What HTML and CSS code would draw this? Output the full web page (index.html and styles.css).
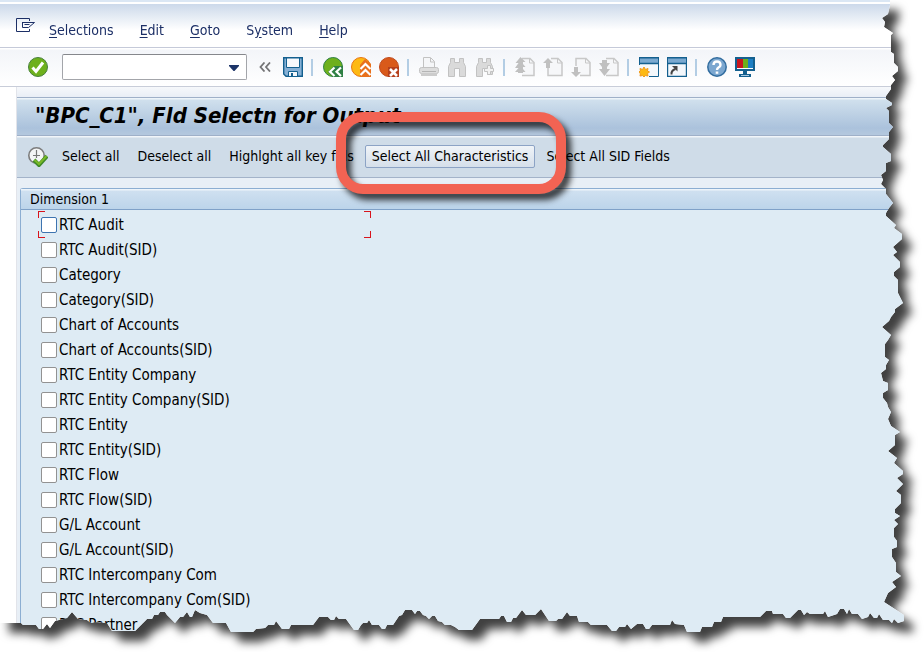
FILE: index.html
```html
<!DOCTYPE html>
<html lang="en">
<head>
    <meta charset="UTF-8">
    <meta name="viewport" content="width=device-width, initial-scale=1.0">
    <title>"BPC_C1", Fld Selectn for Output</title>
    <link rel="stylesheet" href="styles.css">
</head>
<body>
    <div class="shadow">
        <div class="window">
            <nav class="menubar">
                <button type="button" class="menu-icon" aria-label="Menu">
                    <svg width="20" height="16" viewBox="0 0 20 16" fill="none" stroke="#1c2f66" stroke-width="1"><path d="M13.500 4V1.500H.5v13h13V12"/><path d="M6.500 5.500h5M6.500 5v5.500h6M9 5.500h9.500M12.500 10.500l6-5M8.500 7.500h5"/></svg>
                </button>
                <button type="button" class="menu"><u>S</u>elections</button>
                <button type="button" class="menu"><u>E</u>dit</button>
                <button type="button" class="menu"><u>G</u>oto</button>
                <button type="button" class="menu">S<u>y</u>stem</button>
                <button type="button" class="menu"><u>H</u>elp</button>
            </nav>

            <div class="toolbar">
                <button type="button" class="icon" aria-label="Enter">
                    <svg width="20" height="20" viewBox="0 0 20 20"><circle cx="10" cy="10" r="9.500" fill="#6eb01c" stroke="#47803c"/><path d="M4.500 10.500l3.500 4 7-9" fill="none" stroke="#fff" stroke-width="3"/></svg>
                </button>
                <div class="command">
                    <select aria-label="Command"><option></option></select>
                    <svg width="10" height="6" viewBox="0 0 10 6"><path d="M0 0h10v1L5.500 6h-1L0 1z" fill="#1c3468"/></svg>
                </div>
                <button type="button" class="icon small" aria-label="Collapse">
                    <svg width="12" height="10" viewBox="0 0 12 10" fill="none" stroke="#747476" stroke-width="1.800"><path d="M5.500.5L1.500 5l4 4.500M11 .5L7 5l4 4.500"/></svg>
                </button>
                <button type="button" class="icon" aria-label="Save">
                    <svg width="20" height="20" viewBox="0 0 20 20"><path d="M.7.700h18.600v18.600H3l-2.300-2.300z" fill="#86b0d5" stroke="#14608f" stroke-width="1.400"/><path d="M3.500 1h13v9.500h-13z" fill="#f7f9fc" stroke="#14608f"/><path d="M5.500 19v-4.500h9V19" fill="#f4f7fb" stroke="#14608f"/><path d="M8 16h2v3H8z" fill="#14608f"/></svg>
                </button>
                <span class="sep"></span>
                <button type="button" class="icon" aria-label="Back">
                    <svg width="20" height="20" viewBox="0 0 20 20"><path d="M19.500 9.500A9.500 9.500 0 1 0 10 19.500" fill="#6eb01c" stroke="#2f8044"/><path d="M10 20l-5-5 6-6h9v11z" fill="#2f8044"/><path d="M11.500 10.500L7 14.700l4.500 4.300M18 10.500l-4.500 4.200L18 19" fill="none" stroke="#fff" stroke-width="2.200"/></svg>
                </button>
                <button type="button" class="icon" aria-label="Exit">
                    <svg width="20" height="20" viewBox="0 0 20 20"><circle cx="10" cy="10" r="9.500" fill="#fdb913" stroke="#e87511"/><path d="M14 2l6 5v13H9V8z" fill="#e8701c"/><path d="M9.500 12l5-5 5 5M9.500 18l5-5 5 5" fill="none" stroke="#fff" stroke-width="2.200"/></svg>
                </button>
                <button type="button" class="icon" aria-label="Cancel">
                    <svg width="20" height="20" viewBox="0 0 20 20"><circle cx="10" cy="10" r="9.500" fill="#d95a1a" stroke="#c04a1c"/><path d="M9 10h11v10H9z" fill="#b5401c"/><path d="M11 12l7 7M18 12l-7 7" stroke="#fff" stroke-width="2.600"/></svg>
                </button>
                <span class="sep"></span>
                <button type="button" class="icon" aria-label="Print" disabled>
                    <svg width="20" height="20" viewBox="0 0 20 20" fill="#f5f6f8" stroke="#c2c2c2"><path d="M4.500 11V.5h7l4 4V11"/><path d="M11.500 1v4h4" fill="none"/><rect x=".5" y="10.500" width="19" height="6" rx="2" fill="#ddd"/><path d="M2 16h16v3H2z" fill="#ccc" stroke="none"/><path d="M3 14.500h14" stroke="#b4b4b4"/></svg>
                </button>
                <button type="button" class="icon" aria-label="Find" disabled>
                    <svg width="20" height="20" viewBox="0 0 20 20" fill="#dadada" stroke="#c2c2c2"><path d="M3.500 1.500h4v4h5v-4h4v4l2 4v10h-6v-8h-5v8h-6v-10l2-4z"/></svg>
                </button>
                <button type="button" class="icon" aria-label="Find next" disabled>
                    <svg width="20" height="20" viewBox="0 0 20 20" fill="#dadada" stroke="#c2c2c2"><path d="M3.500 1.500h4v4h4v-4h4v4l2 4v8h-5v-6h-5v8h-6v-10l2-4z"/><path d="M12.500 8.500h3v3h3v3h-3v3h-3v-3h-3v-3h3z" fill="#f2f2f2"/></svg>
                </button>
                <span class="sep"></span>
                <button type="button" class="icon" aria-label="First page" disabled>
                    <svg width="20" height="20" viewBox="0 0 20 20"><path d="M7 1.500h8l4 4v13H7" fill="#f6f7f9" stroke="#c8c8c8" stroke-width="1.500"/><path d="M14.500 2v4H19" fill="none" stroke="#c8c8c8"/><path d="M5.500 0l5 5H8v2l2.500 3H8v2l2.500 3H8v1H3v-1H0l3.500-4H0l3.500-5H.5z" fill="#c0c0c0"/></svg>
                </button>
                <button type="button" class="icon" aria-label="Previous page" disabled>
                    <svg width="20" height="20" viewBox="0 0 20 20"><path d="M5 10v8.500h14v-13l-4-4H8" fill="#f6f7f9" stroke="#c8c8c8" stroke-width="1.500"/><path d="M14.500 2v4H19" fill="none" stroke="#c8c8c8"/><path d="M5 1l5 5H7v5H3V6H0z" fill="#c0c0c0"/></svg>
                </button>
                <button type="button" class="icon" aria-label="Next page" disabled>
                    <svg width="20" height="20" viewBox="0 0 20 20"><path d="M5 9V1.500h10l4 4v13H9" fill="#f6f7f9" stroke="#c8c8c8" stroke-width="1.500"/><path d="M14.500 2v4H19" fill="none" stroke="#c8c8c8"/><path d="M5 20l5-5H7v-5H3v5H0z" fill="#c0c0c0"/></svg>
                </button>
                <button type="button" class="icon" aria-label="Last page" disabled>
                    <svg width="20" height="20" viewBox="0 0 20 20"><path d="M7 1.500h8l4 4v13H7" fill="#f6f7f9" stroke="#c8c8c8" stroke-width="1.500"/><path d="M14.500 2v4H19" fill="none" stroke="#c8c8c8"/><path d="M3 3h5v3h3l-3 4v2h3l-5.500 7L0 12h3v-2L0 6h3z" fill="#c0c0c0"/></svg>
                </button>
                <span class="sep"></span>
                <button type="button" class="icon" aria-label="New session">
                    <svg width="20" height="20" viewBox="0 0 20 20"><path d="M.5.500h19v19H.5z" fill="#f3f7fb" stroke="#14608f"/><path d="M1 1h18v5H1z" fill="#7aa9d0"/><path d="M0 .7h20M0 6.500h20" stroke="#14608f" stroke-width="1.400"/><path d="M0 8h10v12H0z" fill="#f6f7f9"/><path d="M5 10l1.500 2.500L9 11.500 8.500 14l2 1-2 1.500.5 2.500-2.500-.5L5 20l-1.500-1.500L1 19l.5-2.500L-.5 15l2-1L1 11.500l2.500 1z" fill="#fdb913" stroke="#f29a1c"/></svg>
                </button>
                <button type="button" class="icon" aria-label="Create shortcut">
                    <svg width="20" height="20" viewBox="0 0 20 20"><path d="M.6.600h18.800v18.800H.6z" fill="#f3f7fb" stroke="#14608f" stroke-width="1.200"/><path d="M1 1h18v5H1z" fill="#7aa9d0"/><path d="M0 .7h20M0 6.500h20" stroke="#14608f" stroke-width="1.400"/><path d="M4.500 17.500q-.5-4 4-5.500" fill="none" stroke="#444" stroke-width="2"/><path d="M5 9h5.500v5.500z" fill="#444"/></svg>
                </button>
                <span class="sep"></span>
                <button type="button" class="icon" aria-label="Help">
                    <svg width="20" height="20" viewBox="0 0 20 20"><circle cx="10" cy="10" r="9.200" fill="#7ba7d0" stroke="#326d9f" stroke-width="1.500"/><path d="M6.500 8q0-3.500 3.500-3.500T13.500 8q0 1.500-2 2.500-1.500 1-1.500 2.500" fill="none" stroke="#fff" stroke-width="2.400"/><path d="M8.700 14.500h2.600v2.300H8.700z" fill="#fff"/></svg>
                </button>
                <button type="button" class="icon" aria-label="Customize layout">
                    <svg width="20" height="20" viewBox="0 0 20 20"><path d="M0 0h20v14H0z" fill="#14608f"/><path d="M2 2h16v10H2z" fill="#fff"/><path d="M2 2h6v9H2z" fill="#c8161d"/><path d="M8 2h5v9H8z" fill="#6eb01c"/><path d="M13 2h5v9h-5z" fill="#1d7fc4"/><path d="M8 14h4v3h4v3H4v-3h4z" fill="#14608f"/><path d="M6 18h8v1H6z" fill="#a9c8e2"/></svg>
                </button>
            </div>

            <main class="screen">
                <h1>"BPC_C1", Fld Selectn for Output</h1>
                <div class="app-toolbar">
                    <button type="button" class="icon" aria-label="Execute">
                        <svg width="20" height="20" viewBox="0 0 20 20"><circle cx="8.500" cy="8.500" r="7.700" fill="#f4f5f5" stroke="#7d7d7d" stroke-width="1.600"/><path d="M8.500 3v8M5 8.500h7" stroke="#777" stroke-width="1.200"/><path d="M6 13l5 5 8-9" fill="none" stroke="#3f8a28" stroke-width="4"/><path d="M6.500 13l4.500 4 7.500-8" fill="none" stroke="#79b928" stroke-width="2"/></svg>
                    </button>
                    <button type="button" class="action">Select all</button>
                    <button type="button" class="action">Deselect all</button>
                    <button type="button" class="action">Highlght all key flds</button>
                    <div class="marked">
                        <button type="button" class="action raised">Select All Characteristics</button>
                        <span class="callout"></span>
                    </div>
                    <button type="button" class="action">Select All SID Fields</button>
                </div>

                <section class="group">
                    <h2>Dimension 1</h2>
                    <ul class="fields">
                        <li class="current"><label><input type="checkbox">RTC Audit</label></li>
                        <li><label><input type="checkbox">RTC Audit(SID)</label></li>
                        <li><label><input type="checkbox">Category</label></li>
                        <li><label><input type="checkbox">Category(SID)</label></li>
                        <li><label><input type="checkbox">Chart of Accounts</label></li>
                        <li><label><input type="checkbox">Chart of Accounts(SID)</label></li>
                        <li><label><input type="checkbox">RTC Entity Company</label></li>
                        <li><label><input type="checkbox">RTC Entity Company(SID)</label></li>
                        <li><label><input type="checkbox">RTC Entity</label></li>
                        <li><label><input type="checkbox">RTC Entity(SID)</label></li>
                        <li><label><input type="checkbox">RTC Flow</label></li>
                        <li><label><input type="checkbox">RTC Flow(SID)</label></li>
                        <li><label><input type="checkbox">G/L Account</label></li>
                        <li><label><input type="checkbox">G/L Account(SID)</label></li>
                        <li><label><input type="checkbox">RTC Intercompany Com</label></li>
                        <li><label><input type="checkbox">RTC Intercompany Com(SID)</label></li>
                        <li><label><input type="checkbox">RTC Partner</label></li>
                    </ul>
                </section>
            </main>
        </div>
    </div>
    <script src="torn.js"></script>
</body>
</html>
```

FILE: styles.css
```css
* {
    box-sizing: border-box;
}
body {
    margin: 0;
    background-color: #fff;
    font-family: "DejaVu Sans Condensed", "DejaVu Sans", Tahoma, sans-serif;
    font-size: 14px;
    color: #000;
    overflow: hidden;
}
button {
    font: inherit;
    color: inherit;
    background: none;
    border: none;
    padding: 0;
    white-space: nowrap;
    cursor: pointer;
}
svg {
    display: block;
}

/* torn sheet */
.shadow {
    filter: drop-shadow(9px 10px 5px rgba(0, 0, 0, 0.75));
}
.window {
    display: flex;
    flex-direction: column;
    height: 100vh;
    overflow: hidden;
    background-color: #fff;
}

.menubar {
    display: flex;
    align-items: center;
    gap: 26px;
    height: 48px;
    padding: 12px 16px 0;
    border-bottom: 1px solid #c5cad9;
    background: linear-gradient(#dbe7f4 2px, #fff 2px, #fff 4px, #ccd9ea 4px, #fff 30px);
    color: #1c2f66;
    flex: none;
}
.menu-icon {
    margin: -10px -13px 0 0;
}
.menu {
    line-height: 20px;
}
.menu u {
    text-underline-offset: 2px;
}

.toolbar {
    display: flex;
    align-items: center;
    gap: 8px;
    height: 39px;
    padding: 0 28px;
    border-bottom: 1px solid #c8cdd9;
    background: linear-gradient(#fff 1px, #f3f5f9 2px, #fff);
    flex: none;
}
.icon {
    width: 20px;
    height: 20px;
    flex: none;
}
.icon.small {
    width: 12px;
    height: 10px;
    margin: 0 4px;
}
.command {
    position: relative;
    width: 185px;
    margin: 0 0 0 6px;
}
.command select {
    display: block;
    appearance: none;
    width: 100%;
    height: 26px;
    border: 1px solid #a3a5aa;
    border-top-color: #85878c;
    border-radius: 2px;
    background-color: #fff;
}
.command svg {
    position: absolute;
    right: 8px;
    top: 11px;
    pointer-events: none;
}
.sep {
    width: 2px;
    height: 17px;
    margin: 0 1px 0 0;
    background-color: #b3cde4;
    flex: none;
}
.sep + .icon {
    margin-left: 1px;
}

.screen {
    display: flex;
    flex-direction: column;
    flex: 1;
    min-height: 0;
    padding: 10px 0 0 16px;
    background: linear-gradient(#f6f8fb, #e9eef6 10px, #e8eff6 10px);
    position: relative;
}
.screen::before {
    content: "";
    position: absolute;
    left: 0;
    top: 0;
    bottom: 0;
    width: 16px;
    background-color: #fff;
    border-right: 1px solid #e2e4ea;
}
h1 {
    margin: 0;
    padding: 0 18px;
    height: 39px;
    line-height: 36px;
    font-size: 22px;
    font-weight: bold;
    font-style: italic;
    border: 1px solid #9fb0c8;
    border-width: 1px 0 1px 1px;
    background: linear-gradient(#edf4f9 1px, #d0e0ed 2px, #abc2dc 30px, #b4c8de);
    white-space: nowrap;
    flex: none;
}
.app-toolbar {
    display: flex;
    align-items: center;
    height: 42px;
    padding: 0 11px;
    border: 1px solid #a3b3c9;
    border-width: 0 0 1px 1px;
    background: linear-gradient(#f1f5f9 1px, #cfdce8 2px);
    flex: none;
}
.app-toolbar .icon {
    margin-right: 7px;
}
.action {
    height: 23px;
    line-height: 21px;
    padding: 0 6px;
    margin-right: 4px;
    border: 1px solid transparent;
    border-radius: 2px;
}
.raised {
    border-color: #8ca3c5;
    background: linear-gradient(#f0f4f8, #d5dfea);
}
.marked {
    position: relative;
}
.callout {
    position: absolute;
    z-index: 1;
    inset: -33px -27px -26px -29px;
    border: 10px solid #f26353;
    border-radius: 27px;
    filter: drop-shadow(5px 6px 3px rgba(0, 0, 0, 0.75));
    pointer-events: none;
}

.group {
    flex: 1;
    margin: 10px 0 0 4px;
    border: 1px solid #8caed2;
    border-width: 1px 0 0 1px;
    border-radius: 3px 0 0 0;
    background-color: #deebf4;
}
h2 {
    margin: 0;
    padding: 0 9px;
    height: 21px;
    line-height: 20px;
    font-size: 14px;
    font-weight: normal;
    border-bottom: 1px solid #7fa1c8;
    background: linear-gradient(#edf4fa 1px, #cfe0f0 2px, #bcd4ea);
}
.fields {
    list-style: none;
    margin: 0;
    padding: 2px 0 0 17px;
}
.fields li {
    width: 333px;
    height: 25px;
    padding-left: 3px;
}
.fields label {
    display: flex;
    align-items: center;
    gap: 2px;
    height: 25px;
    font-size: 15px;
    white-space: nowrap;
}
.fields input {
    appearance: none;
    width: 16px;
    height: 16px;
    margin: 0;
    border: 1px solid #929292;
    border-radius: 2px;
    background-color: #fff;
}
.current {
    position: relative;
}
.current input {
    border-color: #3d74b0;
}
/* red corners around the focused field */
.current::after {
    content: "";
    position: absolute;
    inset: -1px 0;
    pointer-events: none;
    --c: linear-gradient(#d8141c, #d8141c);
    background:
        var(--c) 0 0 / 7px 1px, var(--c) 0 0 / 1px 7px,
        var(--c) 100% 0 / 7px 1px, var(--c) 100% 0 / 1px 7px,
        var(--c) 0 100% / 7px 1px, var(--c) 0 100% / 1px 7px,
        var(--c) 100% 100% / 7px 1px, var(--c) 100% 100% / 1px 7px;
    background-repeat: no-repeat;
}
```

FILE: torn.js
```js
// Right edge, top to bottom: [distance from the right side, y]
const rightEdge = [
    [34, 0], [34, 5], [36, 14], [42, 18], [39, 22], [40, 27], [31, 33], [33, 35], [33, 52], [30, 54], [30, 63],
    [26, 67], [26, 71], [32, 76], [29, 80], [33, 85], [33, 89], [38, 96], [38, 99], [32, 103], [32, 105],
    [38, 108], [35, 111], [35, 123], [31, 127], [35, 132], [35, 139], [41, 145], [41, 147], [33, 154],
    [33, 161], [38, 163], [38, 171], [43, 175], [41, 180], [43, 184], [38, 189], [38, 194], [34, 199],
    [31, 203], [35, 208], [38, 213], [38, 216], [28, 225], [30, 228], [22, 234], [22, 239], [31, 247],
    [27, 252], [31, 255], [24, 262], [24, 267], [30, 272], [30, 276], [26, 280], [26, 293], [21, 303],
    [29, 309], [29, 312], [33, 317], [35, 321], [42, 327], [33, 335], [36, 340], [39, 344], [39, 357],
    [35, 360], [38, 365], [38, 369], [43, 373], [41, 381], [36, 383], [36, 390], [41, 393], [41, 398],
    [37, 403], [36, 407], [33, 412], [36, 419], [33, 426], [24, 432], [29, 435], [29, 445], [36, 451],
    [27, 458], [30, 463], [21, 471], [21, 474], [27, 478], [21, 484], [28, 491], [23, 495], [23, 503],
    [29, 509], [29, 513], [24, 516], [30, 520], [26, 524], [30, 528], [30, 537], [27, 541], [27, 547],
    [32, 549], [32, 557], [28, 563], [28, 572], [23, 576], [32, 582], [28, 587], [36, 593], [40, 602],
    [20, 615], [20, 621]
];

// Bottom edge, right to left: [x, distance from the bottom]
const bottomEdge = [
    [898, 29], [894, 33], [892, 29], [889, 32], [883, 32], [879, 38], [877, 34], [874, 34], [870, 39],
    [868, 35], [862, 33], [858, 38], [852, 38], [849, 43], [847, 38], [844, 43], [840, 43], [837, 38],
    [828, 35], [825, 41], [823, 38], [810, 38], [807, 40], [804, 37], [801, 42], [798, 42], [790, 34],
    [786, 34], [783, 38], [773, 38], [772, 41], [766, 41], [760, 35], [723, 35], [721, 30], [714, 30],
    [712, 25], [702, 25], [700, 20], [687, 20], [684, 27], [675, 28], [672, 32], [670, 27], [652, 27],
    [649, 23], [646, 23], [643, 28], [637, 28], [631, 23], [627, 28], [625, 25], [619, 25], [616, 21],
    [612, 21], [607, 27], [591, 27], [588, 30], [579, 30], [577, 36], [570, 36], [567, 40], [562, 33],
    [558, 33], [556, 31], [549, 31], [541, 43], [535, 37], [526, 37], [522, 42], [516, 34], [513, 34],
    [511, 30], [507, 30], [504, 36], [501, 36], [499, 33], [480, 33], [472, 22], [459, 22], [455, 25],
    [451, 27], [445, 27], [442, 30], [438, 31], [435, 36], [432, 36], [429, 33], [426, 36], [423, 37],
    [420, 41], [417, 41], [415, 38], [412, 42], [405, 42], [402, 37], [399, 36], [393, 27], [387, 27],
    [385, 23], [382, 23], [379, 27], [372, 27], [369, 32], [367, 29], [363, 29], [361, 27], [358, 22],
    [354, 22], [346, 33], [339, 33], [336, 36], [334, 32], [331, 32], [328, 35], [319, 35], [313, 27],
    [291, 27], [289, 23], [282, 23], [276, 31], [274, 27], [268, 27], [265, 24], [256, 23], [253, 20],
    [231, 20], [226, 29], [213, 29], [207, 37], [200, 39], [195, 42], [192, 35], [190, 35], [187, 40],
    [183, 35], [180, 35], [175, 29], [167, 37], [165, 40], [160, 40], [158, 37], [154, 37], [152, 33],
    [147, 33], [138, 24], [135, 21], [112, 21], [107, 29], [95, 30], [91, 29], [87, 32], [78, 33],
    [72, 40], [67, 34], [55, 31], [50, 24], [47, 28], [43, 23], [39, 23], [36, 27], [23, 27], [21, 29],
    [0, 29]
];

const points = ['0 0']
    .concat(rightEdge.map(([x, y]) => `calc(100% - ${x}px) ${y}px`))
    .concat(bottomEdge.map(([x, y]) => `${x}px calc(100% - ${y}px)`));

document.querySelector('.window').style.clipPath = `polygon(${points.join(', ')})`;
```
